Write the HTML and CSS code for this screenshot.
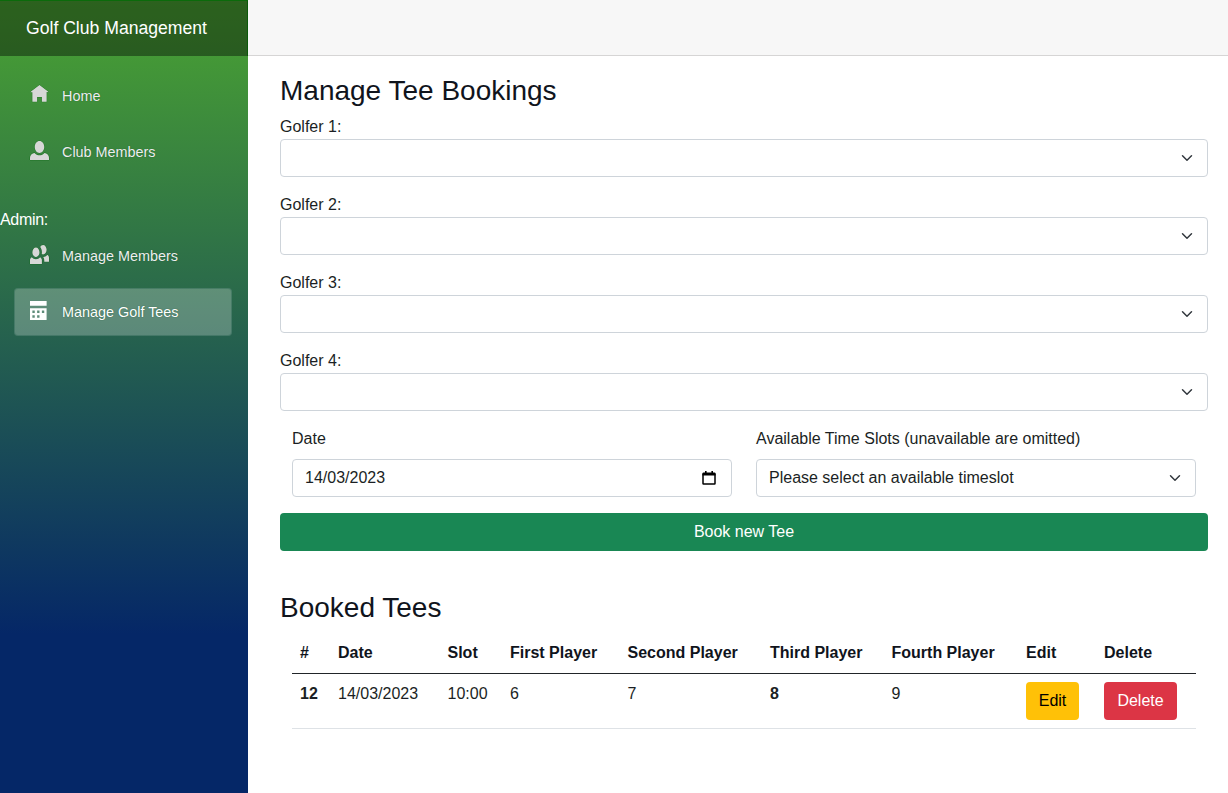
FILE: index.html
```html
<!DOCTYPE html>
<html lang="en">
<head>
<meta charset="utf-8">
<title>Golf Club Management</title>
<link rel="stylesheet" href="styles.css">
</head>
<body>
<div class="page">
  <aside class="sidebar">
    <div class="brand">Golf Club Management</div>
    <nav class="nav">
      <a class="nav-link" href="#">
        <svg class="nav-icon" viewBox="0 0 8 8"><path d="M4 0l-4 3h1v4h2v-2h2v2h2v-4.03l1 .03-4-3z"/></svg>
        <span>Home</span>
      </a>
      <a class="nav-link" href="#">
        <svg class="nav-icon" viewBox="0 0 8 8"><path d="M4 0c-1.1 0-2 1.12-2 2.5s.9 2.5 2 2.5 2-1.12 2-2.5-.9-2.5-2-2.5zm-2.09 5c-1.06.05-1.91.92-1.91 2v1h8v-1c0-1.08-.84-1.95-1.91-2-.54.61-1.28 1-2.09 1-.81 0-1.55-.39-2.09-1z"/></svg>
        <span>Club Members</span>
      </a>
      <div class="nav-heading">Admin:</div>
      <a class="nav-link" href="#">
        <svg class="nav-icon" viewBox="0 0 8 8"><path d="M5.5 0c-.51 0-.95.35-1.22.88.45.54.72 1.28.72 2.13 0 .29-.03.55-.09.81.19.11.38.19.59.19.83 0 1.5-.9 1.5-2s-.67-2-1.5-2zm-3 1c-.83 0-1.5.9-1.5 2s.67 2 1.5 2 1.5-.9 1.5-2-.67-2-1.5-2zm4.75 3.16c-.43.51-1.02.82-1.69.84.27.38.44.84.44 1.34v.66h2v-1.66c0-.52-.31-.97-.75-1.19zm-6.5 1c-.44.22-.75.67-.75 1.19v1.66h5v-1.66c0-.52-.31-.97-.75-1.19-.45.53-1.06.84-1.75.84s-1.3-.32-1.75-.84z"/></svg>
        <span>Manage Members</span>
      </a>
      <a class="nav-link active" href="#">
        <svg class="nav-icon" viewBox="0 0 8 8"><path d="M0 0v2h7v-2h-7zm0 3v4.91c0 .05.04.09.09.09h6.81c.05 0 .09-.04.09-.09v-4.91h-7zm1 1h1v1h-1v-1zm2 0h1v1h-1v-1zm2 0h1v1h-1v-1zm-4 2h1v1h-1v-1zm2 0h1v1h-1v-1z"/></svg>
        <span>Manage Golf Tees</span>
      </a>
    </nav>
  </aside>
  <main class="main">
    <div class="top-row"></div>
    <section class="content">
      <h3 class="title">Manage Tee Bookings</h3>
      <div class="field">
        <label class="label">Golfer 1:</label>
        <select class="select"><option></option></select>
      </div>
      <div class="field">
        <label class="label">Golfer 2:</label>
        <select class="select"><option></option></select>
      </div>
      <div class="field">
        <label class="label">Golfer 3:</label>
        <select class="select"><option></option></select>
      </div>
      <div class="field">
        <label class="label">Golfer 4:</label>
        <select class="select"><option></option></select>
      </div>
      <div class="row">
        <div class="col">
          <label class="label label-gap">Date</label>
          <div class="date-input">
            <span>14/03/2023</span>
            <svg class="date-icon" viewBox="0 0 14 14"><path d="M1 3.2h12v9.3a.5.5 0 0 1-.5.5h-11a.5.5 0 0 1-.5-.5z" fill="none" stroke="#000" stroke-width="1.5"/><path d="M.5 2.6a1 1 0 0 1 1-1h11a1 1 0 0 1 1 1v2h-13z" fill="#000"/><rect x="3" y="0" width="1.6" height="2.5" fill="#000"/><rect x="9.4" y="0" width="1.6" height="2.5" fill="#000"/></svg>
          </div>
        </div>
        <div class="col">
          <label class="label label-gap">Available Time Slots (unavailable are omitted)</label>
          <select class="select"><option>Please select an available timeslot</option></select>
        </div>
      </div>
      <button class="btn btn-book" type="button">Book new Tee</button>
      <h3 class="title title-booked">Booked Tees</h3>
      <div class="table-wrap">
        <table class="table">
          <colgroup>
            <col class="col-id"><col class="col-date"><col class="col-slot"><col class="col-first"><col class="col-second"><col class="col-third"><col class="col-fourth"><col class="col-edit"><col class="col-delete">
          </colgroup>
          <thead>
            <tr>
              <th>#</th><th>Date</th><th>Slot</th><th>First Player</th><th>Second Player</th><th>Third Player</th><th>Fourth Player</th><th>Edit</th><th>Delete</th>
            </tr>
          </thead>
          <tbody>
            <tr>
              <th>12</th><td>14/03/2023</td><td>10:00</td><td>6</td><td>7</td><th>8</th><td>9</td>
              <td><button class="btn btn-edit" type="button">Edit</button></td>
              <td><button class="btn btn-delete" type="button">Delete</button></td>
            </tr>
          </tbody>
        </table>
      </div>
    </section>
  </main>
</div>
</body>
</html>
```

FILE: styles.css
```css
* { box-sizing: border-box; }
html, body { margin: 0; height: 100%; }
body {
  font-family: "Liberation Sans", Arial, sans-serif;
  font-size: 16px;
  line-height: 24px;
  color: #1b1f24;
  background: #fff;
  overflow: hidden;
}
.page { display: flex; height: 793px; }
.sidebar {
  width: 248px;
  flex: none;
  background: linear-gradient(180deg, #4aa332 0%, #052767 80%);
}
.brand {
  height: 56px;
  padding: 0 0 2px 26px;
  display: flex;
  align-items: center;
  background: rgba(0, 0, 0, 0.4);
  border-top: 1px solid #0b6a0b;
  border-right: 1px solid #0b5a0b;
  color: #fff;
  font-size: 17.6px;
}
.nav { padding: 16px 16px 0 14px; display: flex; flex-direction: column; }
.nav-link {
  height: 48px;
  margin-bottom: 8px;
  padding: 0 0 1px 15px;
  display: flex;
  align-items: center;
  border-radius: 4px;
  color: #eeeeee;
  font-size: 14.4px;
  text-decoration: none;
  border: 1px solid transparent;
  text-shadow: 0 0 1px rgba(0, 70, 30, 0.7);
}
.nav-link.active {
  background: rgba(255, 255, 255, 0.25);
  border-color: rgba(0, 70, 50, 0.25);
  color: #fff;
}
.nav-icon {
  width: 19px;
  height: 19px;
  margin-right: 13px;
  margin-top: -3px;
  flex: none;
  overflow: visible;
  fill: #d7d7d7;
  stroke: #0d6a14;
  stroke-width: 0.25;
  paint-order: stroke;
}
.nav-link.active .nav-icon { fill: #fff; stroke: none; }
.nav-heading {
  margin: 24px 0 0 -14px;
  color: #fff;
  font-size: 16px;
  line-height: 24px;
  letter-spacing: -0.3px;
}
.main { flex: 1; min-width: 0; }
.top-row {
  height: 56px;
  background: #f7f7f7;
  border-bottom: 1px solid #d6d5d5;
}
.content { padding: 17.6px 20px 0 32px; }
.title {
  margin: 0 0 8px;
  font-size: 28px;
  font-weight: 400;
  line-height: 33.6px;
  color: #10141c;
}
.title-booked { margin-top: 40px; }
.field { margin-bottom: 16px; }
.label { display: block; }
.label-gap { margin-bottom: 8px; }
.select {
  display: block;
  width: 100%;
  height: 38px;
  padding: 6px 36px 6px 12px;
  font: inherit;
  color: inherit;
  background-color: #fff;
  background-image: url("data:image/svg+xml,%3csvg xmlns='http://www.w3.org/2000/svg' viewBox='0 0 16 16'%3e%3cpath fill='none' stroke='%23343a40' stroke-linecap='round' stroke-linejoin='round' stroke-width='2' d='M2 5l6 6 6-6'/%3e%3c/svg%3e");
  background-repeat: no-repeat;
  background-position: right 12px center;
  background-size: 16px 12px;
  border: 1px solid #ced4da;
  border-radius: 4px;
  appearance: none;
  -webkit-appearance: none;
}
.row { display: flex; margin-bottom: 16px; }
.col { flex: 1 1 0; min-width: 0; padding: 0 12px; }
.date-input {
  height: 38px;
  padding: 0 15px 0 12px;
  display: flex;
  align-items: center;
  justify-content: space-between;
  background: #fff;
  border: 1px solid #ced4da;
  border-radius: 4px;
}
.date-icon { width: 14px; height: 14px; flex: none; }
.btn {
  display: inline-block;
  height: 38px;
  padding: 6px 0;
  font: inherit;
  border: 1px solid transparent;
  border-radius: 4px;
  cursor: pointer;
}
.btn-book { display: block; width: 100%; background: #198754; color: #fff; }
.btn-edit { width: 53px; background: #ffc107; color: #000; }
.btn-delete { width: 73px; background: #dc3545; color: #fff; }
.table-wrap { padding: 0 12px; }
.table { width: 100%; border-collapse: collapse; table-layout: fixed; }
.col-id { width: 38px; }
.col-date { width: 109.5px; }
.col-slot { width: 62.5px; }
.col-first { width: 117.5px; }
.col-second { width: 142.5px; }
.col-third { width: 121.5px; }
.col-fourth { width: 134.5px; }
.col-edit { width: 78px; }
.col-delete { width: 100px; }
.table th, .table td {
  padding: 8px;
  text-align: left;
  vertical-align: top;
  white-space: nowrap;
  border-bottom: 1px solid #dee2e6;
}
.table thead th { vertical-align: bottom; border-bottom-color: #212529; color: #10141c; }
```
